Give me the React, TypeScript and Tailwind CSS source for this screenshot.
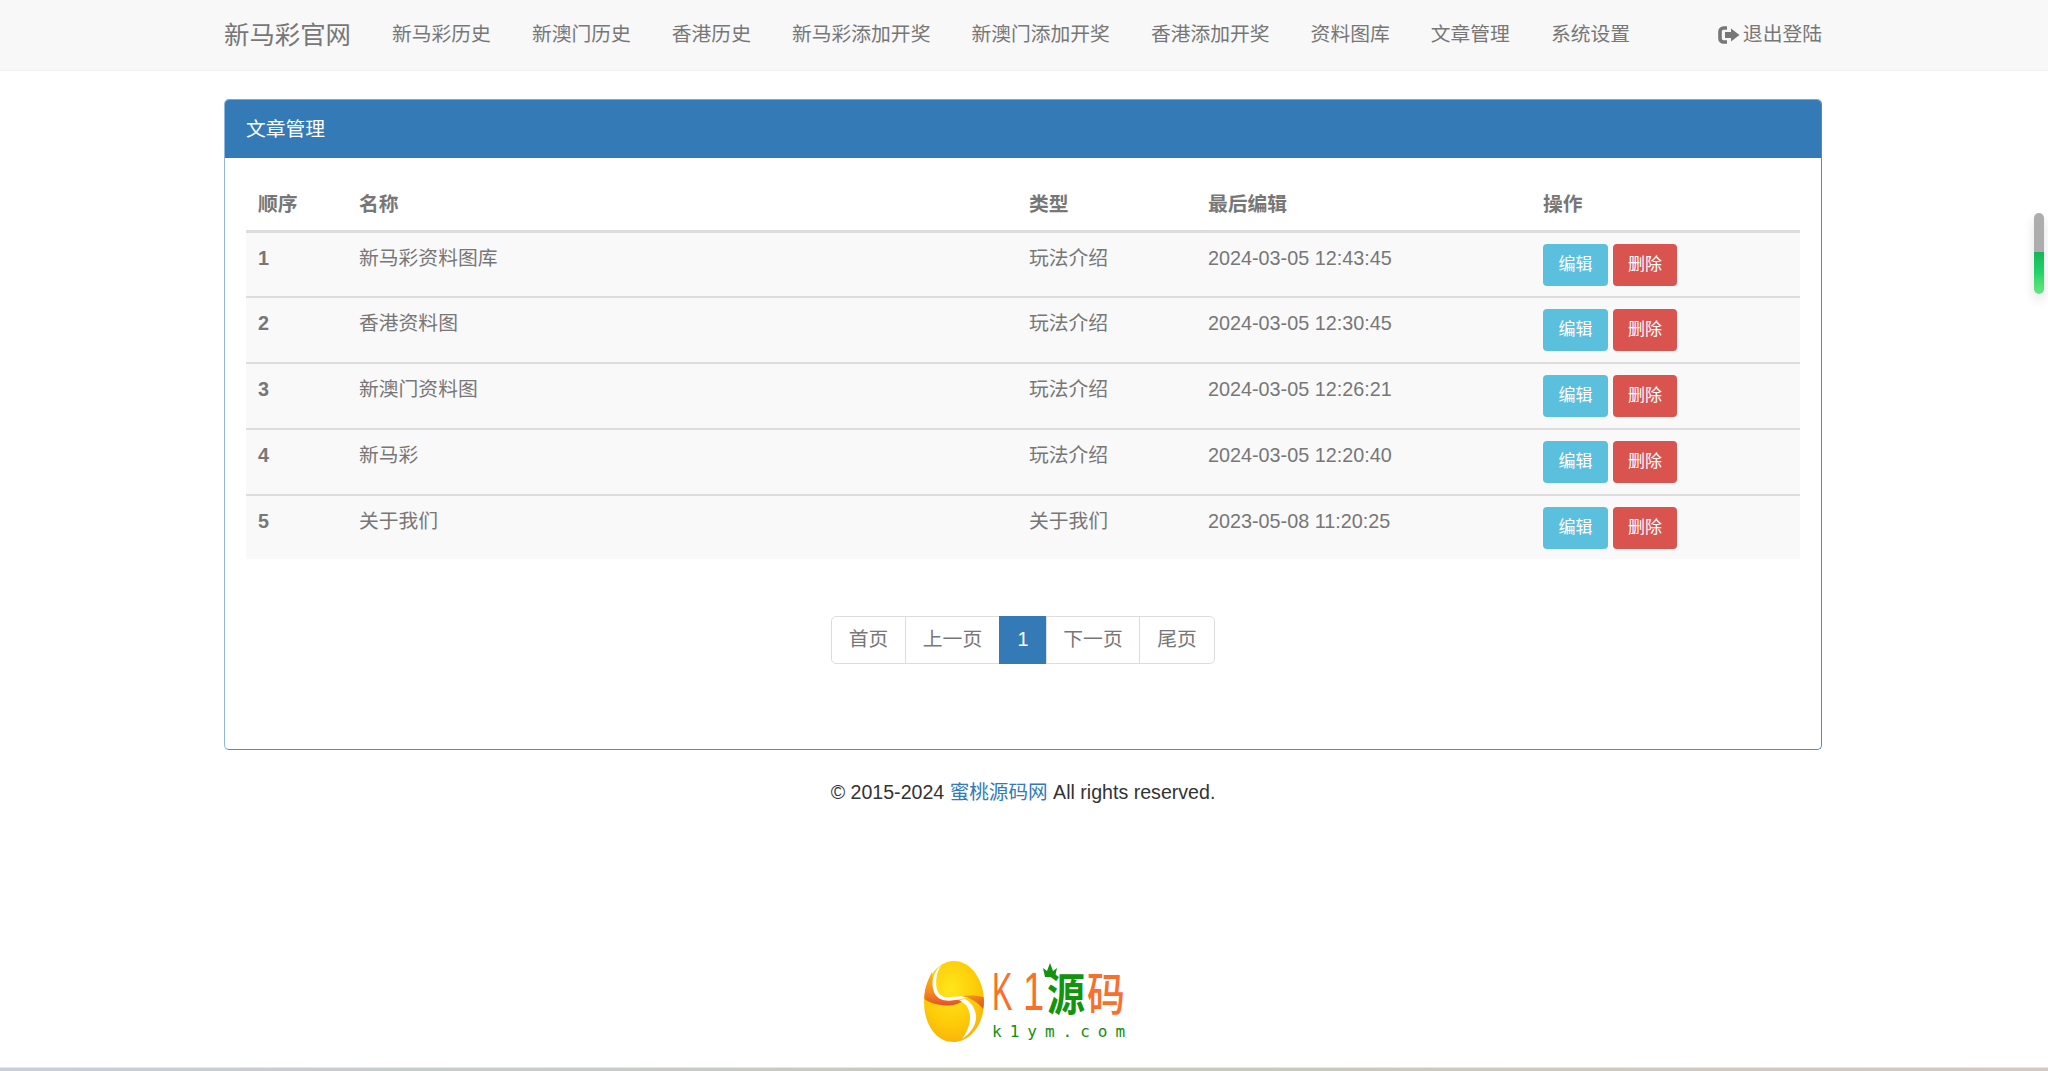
import React from 'react';

const FONT = 'font-["Liberation_Sans","Noto_Sans_CJK_SC",sans-serif]';

const navLinks = ['新马彩历史', '新澳门历史', '香港历史', '新马彩添加开奖', '新澳门添加开奖', '香港添加开奖', '资料图库', '文章管理', '系统设置'];

const articles = [
  { id: 1, name: '新马彩资料图库', type: '玩法介绍', time: '2024-03-05 12:43:45' },
  { id: 2, name: '香港资料图', type: '玩法介绍', time: '2024-03-05 12:30:45' },
  { id: 3, name: '新澳门资料图', type: '玩法介绍', time: '2024-03-05 12:26:21' },
  { id: 4, name: '新马彩', type: '玩法介绍', time: '2024-03-05 12:20:40' },
  { id: 5, name: '关于我们', type: '关于我们', time: '2023-05-08 11:20:25' },
];

function LogoutIcon() {
  return (
    <svg width="22" height="18" viewBox="0 0 22 18" className="shrink-0">
      <path d="M9 2H5.5A3.5 3.5 0 0 0 2 5.5v7A3.5 3.5 0 0 0 5.5 16H9" fill="none" stroke="#777" strokeWidth="3.6" />
      <path d="M7 6h6V2.6L21.5 9 13 15.4V12H7z" fill="#777" />
    </svg>
  );
}

function Logo() {
  return (
    <div className="flex w-[200px] items-start gap-[8px]">
      <svg width="60" height="81" viewBox="0 0 60 81" className="shrink-0">
        <defs>
          <radialGradient id="egg" cx="45%" cy="35%" r="75%">
            <stop offset="0%" stopColor="#ffe61a" />
            <stop offset="60%" stopColor="#fdca08" />
            <stop offset="100%" stopColor="#f7ab0c" />
          </radialGradient>
          <linearGradient id="leftBand" x1="0" y1="0" x2="0" y2="1">
            <stop offset="0%" stopColor="#fbb90f" />
            <stop offset="60%" stopColor="#f58a1f" />
            <stop offset="100%" stopColor="#e2512a" />
          </linearGradient>
          <linearGradient id="rightBand" x1="0" y1="0" x2="1" y2="1">
            <stop offset="0%" stopColor="#f9a11a" />
            <stop offset="100%" stopColor="#e04f2a" />
          </linearGradient>
        </defs>
        <path d="M30 0C47 0 60 19 60 41 60 64 46 81 29 81 12 81 0 63 0 41 0 19 13 0 30 0z" fill="url(#egg)" />
        <path d="M8 11C3 20 0 30 .5 38 6 42 14 44.500 25 44.500 31 44.500 36 42 40 39L24 39C14 38 10 30 9 22z" fill="url(#leftBand)" />
        <path d="M18 3C9 11 6.500 22 10 31 13 39 22 41 31 39 40 37 48 36 55 37 46 34.500 36 35 27 36 19 37 13.500 34 12.500 26 11.500 18 13 10 18 3z" fill="#ffffff" />
        <path d="M38 35C45 34 53 34.500 59.500 36 60.300 40 60 44 59 48 55 42 47 37 38 35z" fill="url(#rightBand)" />
        <path d="M41 38C47 41 51 47 52 54 53 63 47 72 38 78 43 71 46.500 63 46 55 45.500 48 42 42 35 39.500z" fill="#ffffff" />
      </svg>
      <div className="flex flex-col pt-[7px]">
        <div className="relative flex h-[47px] items-center">
          <span className="w-[31px] origin-left scale-x-[0.58] font-['Liberation_Sans',sans-serif] text-[53px] leading-[47px] text-[#f8702a]">K</span>
          <span className="w-[24px] origin-left scale-x-[0.72] font-['Liberation_Sans',sans-serif] text-[53px] leading-[47px] text-[#f8702a]">1</span>
          <svg width="16" height="15" viewBox="0 0 16 15" className="absolute left-[50px] top-[-5px]">
            <path d="M1 5l4 3 3-8 3 8 4-3-2 9H3z" fill="#14930e" />
          </svg>
          <span className="w-[40px] scale-y-[1.2] font-['Noto_Sans_CJK_SC',sans-serif] text-[38px] font-bold leading-[47px] text-[#14930e]">源</span>
          <span className="w-[38px] scale-y-[1.2] font-['Noto_Sans_CJK_SC',sans-serif] text-[38px] font-medium leading-[47px] text-[#f8702a]">码</span>
        </div>
        <span className="mt-[7px] whitespace-nowrap font-['DejaVu_Sans_Mono',monospace] text-[16px] leading-[20px] tracking-[8px] text-[#0f8f0f]">k1ym.com</span>
      </div>
    </div>
  );
}

export default function App() {
  return (
    <div className={`relative flex h-[1071px] flex-col overflow-hidden bg-white text-[19.8px] text-[#777] ${FONT}`}>
      {/* Navbar */}
      <nav className="h-[71px] shrink-0 border-b border-[#f1f1f1] bg-[#f8f8f8]">
        <div className="ml-[224px] flex h-[70px] w-[1598px] items-center gap-[41px]">
          <a className="text-[25.4px] text-[#777]">新马彩官网</a>
          {navLinks.map((link) => (
            <a key={link} className="text-[#777]">{link}</a>
          ))}
          <a className="ml-auto flex items-center gap-[3px] text-[#777]">
            <LogoutIcon />
            退出登陆
          </a>
        </div>
      </nav>

      {/* Panel */}
      <main className="ml-[224px] mt-[28px] h-[651px] w-[1598px] shrink-0 rounded-[5px] border border-[#4f8ec4] border-l-[#8fb8da] border-t-[#7fa9d0] bg-white">
        <div className="flex h-[58px] items-center rounded-t-[4px] bg-[#337ab7] px-[21px] pt-[1px] text-white">文章管理</div>
        <div className="px-[21px] pt-[21px]">
          <table className="w-full table-fixed border-collapse">
            <colgroup>
              <col className="w-[101px]" />
              <col className="w-[670px]" />
              <col className="w-[179px]" />
              <col className="w-[335px]" />
              <col />
            </colgroup>
            <thead>
              <tr className="h-[52px] border-b-[3px] border-[#ddd] text-left font-bold">
                <th className="px-[12px] pt-[2px]">顺序</th>
                <th className="px-[12px] pt-[2px]">名称</th>
                <th className="px-[12px] pt-[2px]">类型</th>
                <th className="px-[12px] pt-[2px]">最后编辑</th>
                <th className="px-[12px] pt-[2px]">操作</th>
              </tr>
            </thead>
            <tbody>
              {articles.map((row, i) => (
                <tr key={row.id} className={`bg-[#f9f9f9] align-top ${i === 4 ? 'h-[64px]' : 'h-[66px]'} ${i > 0 ? 'border-t-2 border-[#ddd]' : ''}`}>
                  <td className="px-[12px] pt-[11px] font-bold">{row.id}</td>
                  <td className="px-[12px] pt-[11px]">{row.name}</td>
                  <td className="px-[12px] pt-[11px]">{row.type}</td>
                  <td className="px-[12px] pt-[11px]">{row.time}</td>
                  <td className="px-[12px] pt-[11px]">
                    <div className="flex gap-[5px]">
                      <button className="flex h-[42px] w-[65px] items-center justify-center rounded-[4px] bg-[#5bc0de] text-[17px] text-white">编辑</button>
                      <button className="flex h-[42px] w-[64px] items-center justify-center rounded-[4px] bg-[#d9534f] text-[17px] text-white">删除</button>
                    </div>
                  </td>
                </tr>
              ))}
            </tbody>
          </table>

          {/* Pagination */}
          <div className="mt-[57px] flex justify-center">
            <div className="flex h-[48px]">
              <a className="flex w-[75px] items-center justify-center rounded-l-[5px] border border-[#ddd]">首页</a>
              <a className="ml-[-1px] flex w-[95px] items-center justify-center border border-[#ddd]">上一页</a>
              <a className="ml-[-1px] flex w-[48px] items-center justify-center border border-[#337ab7] bg-[#337ab7] text-white">1</a>
              <a className="ml-[-1px] flex w-[94px] items-center justify-center border border-[#ddd]">下一页</a>
              <a className="ml-[-1px] flex w-[76px] items-center justify-center rounded-r-[5px] border border-[#ddd]">尾页</a>
            </div>
          </div>
        </div>
      </main>

      {/* Footer */}
      <footer className="ml-[224px] mt-[28px] w-[1598px] shrink-0 text-center text-[19.6px] leading-[28px] text-[#333]">
        © 2015-2024 <a className="text-[#337ab7]">蜜桃源码网</a> All rights reserved.
      </footer>

      <div className="mt-[155px] flex shrink-0 justify-center">
        <Logo />
      </div>

      {/* Bottom edge strip */}
      <div className="absolute bottom-0 left-0 h-[4px] w-full border-t border-[#e8e8e8] bg-gradient-to-r from-[#c9ced8] via-[#c6c9bc] to-[#d2c8c4]" />

      {/* Floating scroll widget */}
      <div className="absolute left-[2034px] top-[213px] flex h-[81px] w-[10px] flex-col overflow-hidden rounded-full shadow-[0_6px_12px_rgba(0,0,0,0.12)]">
        <div className="h-[39px] bg-[#adadad]" />
        <div className="h-[42px] bg-gradient-to-b from-[#18b45a] via-[#22d36c] to-[#66e680]" />
      </div>
    </div>
  );
}
